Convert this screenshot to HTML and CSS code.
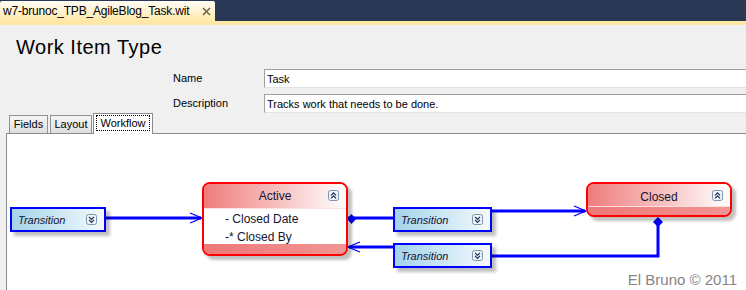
FILE: index.html
```html
<!DOCTYPE html>
<html lang="en">
<head>
  <meta charset="UTF-8" />
  <meta name="viewport" content="width=device-width, initial-scale=1.0"/>
  <title>Work Item Type</title>
  <link rel="stylesheet" href="styles.css">
</head>
<body>

  <div class="doc-bar">
    <div class="doc-tab">
      <span class="doc-name">w7-brunoc_TPB_AgileBlog_Task.wit</span>
      <svg class="doc-close" viewBox="0 0 9 9" width="9" height="9">
        <path d="M1 1 L8 8 M8 1 L1 8" stroke="#6f6550" stroke-width="1.6"/>
      </svg>
    </div>
  </div>
  <div class="doc-strip"></div>

  <h1 class="title">Work Item Type</h1>

  <div class="props">
    <label>Name</label>
    <div class="field">Task</div>
    <label>Description</label>
    <div class="field">Tracks work that needs to be done.</div>
  </div>

  <div class="tabs">
    <div class="tab tab-fields">Fields</div>
    <div class="tab tab-layout">Layout</div>
    <div class="tab tab-workflow selected"><span class="focus">Workflow</span></div>
  </div>

  <div class="canvas">
    <svg class="links" width="739" height="156" viewBox="0 0 739 156">
      <g stroke="#0000ff" fill="none">
        <!-- transition -> Active -->
        <line x1="99" y1="84" x2="194" y2="84" stroke-width="3"/>
        <polyline points="183,79 195,84 183,89" stroke-width="1.3"/>
        <!-- Active -> transition -> Closed -->
        <line x1="341" y1="84" x2="386" y2="84" stroke-width="3"/>
        <line x1="485" y1="77" x2="578" y2="77" stroke-width="3"/>
        <polyline points="567,72 579,77 567,82" stroke-width="1.3"/>
        <!-- Closed -> transition -> Active -->
        <polyline points="485,122 651,122 651,88" stroke-width="3"/>
        <line x1="386" y1="113" x2="342" y2="113" stroke-width="3"/>
        <polyline points="353,108 341,113 353,118" stroke-width="1.3"/>
      </g>
      <g fill="#0000ff">
        <polygon points="344.5,80 349,85 344.5,90 340,85"/>
        <polygon points="651,83 656,88 651,93 646,88"/>
      </g>
    </svg>

    <div class="transition t-start">
      Transition
      <svg class="toggle" viewBox="0 0 11 11" width="11" height="11">
        <rect x="0.5" y="0.5" width="10" height="10" rx="2" fill="#eef4fa" stroke="#7f93ad"/>
        <path d="M3 2.8 L5.5 5.3 L8 2.8 M3 5.8 L5.5 8.3 L8 5.8" fill="none" stroke="#1d2f56" stroke-width="1.2"/>
      </svg>
    </div>

    <div class="state s-active">
      <div class="state-head">
        Active
        <svg class="toggle" viewBox="0 0 11 11" width="11" height="11">
          <rect x="0.5" y="0.5" width="10" height="10" rx="2" fill="#eef4fa" stroke="#7f93ad"/>
          <path d="M3 5.3 L5.5 2.8 L8 5.3 M3 8.3 L5.5 5.8 L8 8.3" fill="none" stroke="#1d2f56" stroke-width="1.2"/>
        </svg>
      </div>
      <div class="state-body">
        <div>- Closed Date</div>
        <div>-* Closed By</div>
      </div>
      <div class="state-foot"></div>
    </div>

    <div class="transition t-close">
      Transition
      <svg class="toggle" viewBox="0 0 11 11" width="11" height="11">
        <rect x="0.5" y="0.5" width="10" height="10" rx="2" fill="#eef4fa" stroke="#7f93ad"/>
        <path d="M3 2.8 L5.5 5.3 L8 2.8 M3 5.8 L5.5 8.3 L8 5.8" fill="none" stroke="#1d2f56" stroke-width="1.2"/>
      </svg>
    </div>

    <div class="transition t-reopen">
      Transition
      <svg class="toggle" viewBox="0 0 11 11" width="11" height="11">
        <rect x="0.5" y="0.5" width="10" height="10" rx="2" fill="#eef4fa" stroke="#7f93ad"/>
        <path d="M3 2.8 L5.5 5.3 L8 2.8 M3 5.8 L5.5 8.3 L8 5.8" fill="none" stroke="#1d2f56" stroke-width="1.2"/>
      </svg>
    </div>

    <div class="state s-closed">
      <div class="state-head">
        Closed
        <svg class="toggle" viewBox="0 0 11 11" width="11" height="11">
          <rect x="0.5" y="0.5" width="10" height="10" rx="2" fill="#eef4fa" stroke="#7f93ad"/>
          <path d="M3 5.3 L5.5 2.8 L8 5.3 M3 8.3 L5.5 5.8 L8 8.3" fill="none" stroke="#1d2f56" stroke-width="1.2"/>
        </svg>
      </div>
      <div class="state-foot"></div>
    </div>

    <div class="watermark">El Bruno &copy; 2011</div>
  </div>

</body>
</html>
```

FILE: styles.css
```css
* {
  box-sizing: border-box;
}
body {
  margin: 0;
  width: 746px;
  height: 290px;
  overflow: hidden;
  background: #f0f0f0;
  font-family: "Liberation Sans", Arial, sans-serif;
  color: #000;
}

/* document tab strip */
.doc-bar {
  height: 21px;
  padding-top: 1px;
  background: #293955;
}
.doc-tab {
  width: 215px;
  height: 20px;
  display: flex;
  align-items: center;
  padding: 0 4px 0 3px;
  background: linear-gradient(#fffcf4, #fff3d2 50%, #ffe8a6);
  border-radius: 2px 2px 0 0;
}
.doc-name {
  font-size: 12px;
  letter-spacing: -0.2px;
}
.doc-close {
  margin-left: auto;
  margin-top: 1px;
}
.doc-strip {
  height: 4px;
  background: #ffe8a6;
}

.title {
  margin: 10px 0 0 16px;
  font-size: 20px;
  line-height: 24px;
  font-weight: normal;
  letter-spacing: 0.5px;
}

/* name / description */
.props {
  display: grid;
  grid-template-columns: 91px 1fr;
  row-gap: 6px;
  margin: 10px -4px 0 173px;
  font-size: 11px;
}
.props label {
  line-height: 19px;
}
.field {
  height: 19px;
  padding: 0 2px;
  line-height: 18px;
  background: #fff;
  border-top: 1px solid #a0a0a0;
  border-left: 1px solid #a0a0a0;
  border-bottom: 1px solid #e3e3e3;
}

/* designer tabs */
.tabs {
  display: flex;
  align-items: flex-end;
  height: 20px;
  padding-left: 9px;
  font-size: 11px;
}
.tab {
  height: 18px;
  line-height: 17px;
  text-align: center;
  border: 1px solid #919191;
  border-bottom: none;
  background: linear-gradient(#f6f6f6, #dedede);
}
.tab-fields {
  width: 39px;
}
.tab-layout {
  width: 42px;
  margin-left: 2px;
}
.tab-workflow {
  width: 60px;
  margin-left: 1px;
}
.tab.selected {
  position: relative;
  z-index: 1;
  height: 21px;
  margin-bottom: -1px;
  padding: 1px 2px 0;
  background: #fff;
  border-color: #898c95;
}
.focus {
  display: block;
  height: 16px;
  line-height: 14px;
  border: 1px dotted #000;
}

/* workflow canvas */
.canvas {
  position: relative;
  height: 157px;
  margin-left: 6px;
  background: #fff;
  border-left: 1px solid #898c95;
  border-top: 1px solid #898c95;
}
.links {
  position: absolute;
  left: 0;
  top: 0;
}

.transition {
  position: absolute;
  height: 25px;
  display: flex;
  align-items: center;
  padding: 0 7px 0 6px;
  border: 2px solid #0000ff;
  background: linear-gradient(to right, #a3d3ea, #f4fafd);
  box-shadow: 4px 4px 3px rgba(0, 0, 0, 0.25);
  font-size: 11px;
  font-style: italic;
  color: #141432;
}
.transition .toggle {
  margin-left: auto;
}
.t-start {
  left: 3px;
  top: 73px;
  width: 96px;
}
.t-close {
  left: 386px;
  top: 73px;
  width: 99px;
}
.t-reopen {
  left: 386px;
  top: 109px;
  width: 99px;
}

.state {
  position: absolute;
  width: 146px;
  border: 2px solid #ff0000;
  border-radius: 8px;
  overflow: hidden;
  background: #fff;
  box-shadow: 4px 4px 3px rgba(0, 0, 0, 0.25);
  font-size: 12px;
  color: #14142e;
}
.state-head {
  position: relative;
  height: 25px;
  line-height: 25px;
  text-align: center;
  background: linear-gradient(to right, #ee7c7c, #f8c4c4 55%, #fff);
  border-bottom: 1px solid #fbe0e0;
}
.state-head .toggle {
  position: absolute;
  right: 7px;
  top: 6px;
}
.state-body {
  height: 35px;
  padding: 1px 0 0 21px;
}
.state-body div {
  height: 18px;
  line-height: 18px;
}
.state-foot {
  height: 10px;
  background: linear-gradient(to right, #ee7878, #f29494);
}
.s-active {
  left: 195px;
  top: 48px;
}
.s-closed {
  left: 579px;
  top: 48px;
}
.s-closed .state-head {
  height: 23px;
  line-height: 26px;
}
.s-closed .state-foot {
  height: 8px;
}

.watermark {
  position: absolute;
  right: 9px;
  bottom: 2px;
  font-size: 15px;
  color: #858585;
}
```
